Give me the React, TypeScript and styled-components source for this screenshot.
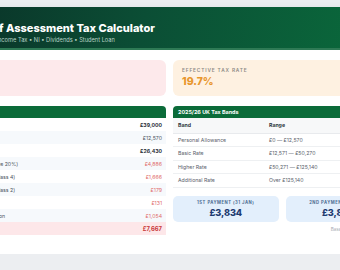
import styled, { createGlobalStyle } from 'styled-components'

const GlobalStyle = createGlobalStyle`
  html, body {
    margin: 0;
    padding: 0;
    background: #eceef1;
    overflow: hidden;
  }
  body {
    font-family: Inter, "Noto Sans", sans-serif;
  }
`

const Page = styled.div`
  width: 469px;
  margin-left: -68px;
  padding-top: 7px;
`

const Card = styled.div`
  background: #fff;
  border-radius: 10px;
  overflow: hidden;
  box-shadow: 0 2px 8px rgba(0, 0, 0, 0.08);
  padding-bottom: 19px;
`

const Header = styled.header`
  height: 43px;
  box-sizing: border-box;
  padding: 14.5px 0 0 50px;
  display: flex;
  flex-direction: column;
  gap: 2px;
  background: linear-gradient(100deg, #0a2f26 0%, #0b4e35 45%, #0a6c3c 100%);
  border-bottom: 2px solid #2e7a55;
`

const Title = styled.h1`
  margin: 0;
  font-size: 11px;
  line-height: 12px;
  font-weight: 800;
  color: #fff;
`

const Subtitle = styled.p`
  margin: 0;
  font-size: 5.7px;
  line-height: 7px;
  color: #b9d3c6;
`

const Body = styled.div`
  padding: 10px 10px 0;
  display: grid;
  grid-template-columns: 224px 218px;
  gap: 10px 7px;
`

const Stat = styled.div<{ $bg: string }>`
  height: 36px;
  box-sizing: border-box;
  padding: 7px 9px;
  border-radius: 6px;
  background: ${p => p.$bg};
  display: flex;
  flex-direction: column;
  gap: 3px;
`

const StatLabel = styled.span`
  font-size: 4.8px;
  font-weight: 600;
  letter-spacing: 0.85px;
  color: #8d8a85;
`

const StatValue = styled.span<{ $color: string }>`
  font-size: 10.5px;
  font-weight: 800;
  color: ${p => p.$color};
  line-height: 11px;
`

const Table = styled.table`
  width: 100%;
  border-collapse: collapse;
  font-size: 5.2px;
  color: #3b4350;
`

const BarCell = styled.th`
  height: 12px;
  padding: 0 5px;
  background: #0b6b39;
  color: #fff;
  font-size: 5.4px;
  font-weight: 700;
  text-align: left;
  border-radius: 4px 4px 0 0;
`

const Row = styled.tr<{ $total?: boolean }>`
  height: 13px;
  background: ${p => (p.$total ? '#fde7e9' : '#fff')};
  &:nth-child(even) {
    background: ${p => (p.$total ? '#fde7e9' : '#f6f9fc')};
  }
`

const Cell = styled.td<{ $right?: boolean; $bold?: boolean; $tone?: 'red' | 'total' }>`
  padding: 0 4px;
  text-align: ${p => (p.$right ? 'right' : 'left')};
  font-weight: ${p => (p.$bold || p.$tone === 'total' ? 700 : 400)};
  color: ${p => (p.$tone === 'red' ? '#e06a6a' : p.$tone === 'total' ? '#c9393b' : p.$bold ? '#2a2f38' : '#4b5360')};
  font-size: ${p => (p.$tone === 'total' ? '5.9px' : '5.2px')};
`

const RightCol = styled.div`
  display: flex;
  flex-direction: column;
`

const BandHead = styled.tr`
  height: 15px;
  background: #f7f8f9;
  border-bottom: 1px solid #e8eaed;
  & > td {
    font-weight: 700;
    color: #2f3640;
  }
`

const BandRow = styled.tr`
  height: 13.5px;
  border-bottom: 1px solid #eef0f2;
  & > td {
    color: #5a616b;
  }
`

const BandCell = styled.td<{ $first?: boolean }>`
  padding: 0 5px;
  width: ${p => (p.$first ? '81px' : 'auto')};
`

const Payments = styled.div`
  margin-top: 8px;
  display: grid;
  grid-template-columns: 1fr 1fr;
  gap: 7px;
`

const PayBox = styled.div`
  height: 26px;
  border-radius: 5px;
  background: #e3effc;
  display: flex;
  flex-direction: column;
  align-items: center;
  justify-content: center;
  gap: 2px;
`

const PayLabel = styled.span`
  font-size: 4.2px;
  font-weight: 700;
  letter-spacing: 0.5px;
  color: #4d6c92;
`

const PayValue = styled.span`
  font-size: 9.2px;
  font-weight: 800;
  letter-spacing: -0.1px;
  color: #1e3b70;
  line-height: 11px;
`

const Note = styled.p`
  margin: 5px 0 0;
  font-size: 4.6px;
  color: #a0a6ae;
  text-align: right;
`

const breakdown: { label: string; value: string; bold?: boolean; tone?: 'red' | 'total' }[] = [
  { label: 'Total Income', value: '£39,000', bold: true },
  { label: 'Personal Allowance', value: '£12,570' },
  { label: 'Taxable Income', value: '£26,430', bold: true },
  { label: 'Income Tax (Basic Rate 20%)', value: '£4,886', tone: 'red' },
  { label: 'National Insurance (Class 4)', value: '£1,666', tone: 'red' },
  { label: 'National Insurance (Class 2)', value: '£179', tone: 'red' },
  { label: 'Dividend Tax', value: '£131', tone: 'red' },
  { label: 'Student Loan Deduction', value: '£1,054', tone: 'red' },
  { label: 'Total Tax Due', value: '£7,667', tone: 'total' },
]

const bands = [
  ['Personal Allowance', '£0 — £12,570'],
  ['Basic Rate', '£12,571 — £50,270'],
  ['Higher Rate', '£50,271 — £125,140'],
  ['Additional Rate', 'Over £125,140'],
]

const App = () => {
  return (
    <Page>
      <GlobalStyle />
      <Card>
        <Header>
          <Title>Self Assessment Tax Calculator</Title>
          <Subtitle>UK • Income Tax • NI • Dividends • Student Loan</Subtitle>
        </Header>
        <Body>
          <Stat $bg="#fde9eb">
            <StatLabel>TOTAL TAX DUE</StatLabel>
            <StatValue $color="#c9393b">£7,667</StatValue>
          </Stat>
          <Stat $bg="#fef1e1">
            <StatLabel>EFFECTIVE TAX RATE</StatLabel>
            <StatValue $color="#e8962c">19.7%</StatValue>
          </Stat>

          <Table>
            <thead>
              <tr>
                <BarCell colSpan={2}>Tax Breakdown</BarCell>
              </tr>
            </thead>
            <tbody>
              {breakdown.map(r => (
                <Row key={r.label} $total={r.tone === 'total'}>
                  <Cell $bold={r.bold} $tone={r.tone === 'total' ? 'total' : undefined}>{r.label}</Cell>
                  <Cell $right $bold={r.bold} $tone={r.tone}>{r.value}</Cell>
                </Row>
              ))}
            </tbody>
          </Table>

          <RightCol>
            <Table>
              <thead>
                <tr>
                  <BarCell colSpan={2}>2025/26 UK Tax Bands</BarCell>
                </tr>
              </thead>
              <tbody>
                <BandHead>
                  <BandCell $first>Band</BandCell>
                  <BandCell>Range</BandCell>
                </BandHead>
                {bands.map(([band, range]) => (
                  <BandRow key={band}>
                    <BandCell $first>{band}</BandCell>
                    <BandCell>{range}</BandCell>
                  </BandRow>
                ))}
              </tbody>
            </Table>
            <Payments>
              <PayBox>
                <PayLabel>1ST PAYMENT (31 JAN)</PayLabel>
                <PayValue>£3,834</PayValue>
              </PayBox>
              <PayBox>
                <PayLabel>2ND PAYMENT (31 JUL)</PayLabel>
                <PayValue>£3,834</PayValue>
              </PayBox>
            </Payments>
            <Note>Based on 2025/26 tax rates</Note>
          </RightCol>
        </Body>
      </Card>
    </Page>
  )
}

export default App
